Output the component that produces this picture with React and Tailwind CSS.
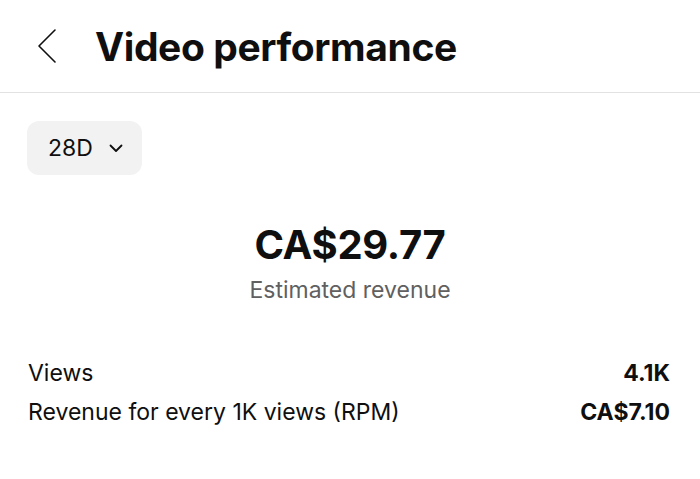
import React from "react";

const App = () => {
  return (
    <div
      className="w-[700px] h-[479px] bg-white text-[#0f0f0f] overflow-hidden"
      style={{ fontFamily: "Inter, 'Noto Sans', sans-serif" }}
    >
      {/* Header */}
      <header className="h-[93px] flex items-center border-b border-[#e2e2e2]">
        <button className="ml-[34px] w-[26px] h-[40px] flex items-center justify-center">
          <svg width="22" height="36" viewBox="0 0 22 36" fill="none">
            <path d="M19 2 L3 18 L19 34" stroke="#0f0f0f" strokeWidth="1.6" strokeLinecap="round" strokeLinejoin="round" />
          </svg>
        </button>
        <h1 className="ml-[35px] text-[39px] font-bold tracking-[-0.4px] leading-none">Video performance</h1>
      </header>

      {/* Period selector */}
      <div className="px-[27px] pt-[28px]">
        <button className="h-[54px] w-[115px] rounded-[12px] bg-[#f2f2f2] flex items-center pl-[21px] gap-[16px]">
          <span className="text-[23px] leading-none">28D</span>
          <svg width="14" height="9" viewBox="0 0 14 9" fill="none">
            <path d="M1.5 1.5 L7 7 L12.5 1.5" stroke="#0f0f0f" strokeWidth="1.8" strokeLinecap="round" strokeLinejoin="round" />
          </svg>
        </button>
      </div>

      {/* Revenue */}
      <div className="flex flex-col items-center mt-[50px]">
        <div className="text-[40px] font-bold leading-none tracking-[-0.3px]">CA$29.77</div>
        <div className="mt-[14px] text-[23px] text-[#606060] leading-none">Estimated revenue</div>
      </div>

      {/* Metrics */}
      <div className="px-[28px] pr-[30px] mt-[58px] flex flex-col gap-[13px]">
        <div className="flex justify-between items-center text-[23px] leading-[26px]">
          <span>Views</span>
          <span className="font-bold">4.1K</span>
        </div>
        <div className="flex justify-between items-center text-[23px] leading-[26px]">
          <span>Revenue for every 1K views (RPM)</span>
          <span className="font-bold">CA$7.10</span>
        </div>
      </div>
    </div>
  );
};

export default App;
